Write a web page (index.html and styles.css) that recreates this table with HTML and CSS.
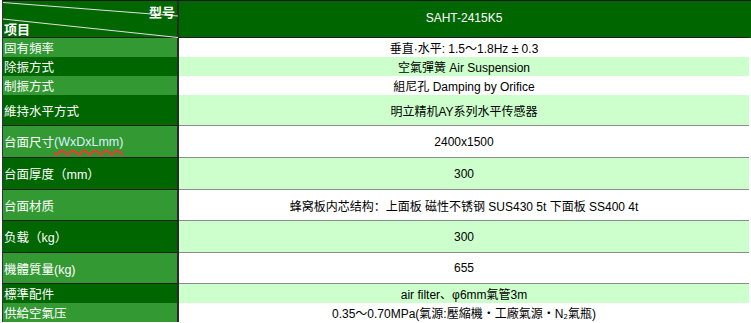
FILE: index.html
```html
<!DOCTYPE html>
<html lang="zh">
<head>
<meta charset="utf-8">
<title>SAHT-2415K5</title>
<link rel="stylesheet" href="styles.css">
</head>
<body>
<div class="spec">
  <div class="row head">
    <div class="key corner">
      <svg class="diag" width="175" height="37" viewBox="0 0 175 37">
        <line x1="0" y1="1.5" x2="175" y2="15" />
        <line x1="0" y1="18" x2="175" y2="36.5" />
      </svg>
      <span class="model">型号</span>
      <span class="item">项目</span>
    </div>
    <div class="val">SAHT-2415K5</div>
  </div>
  <div class="row s odd"><div class="key">固有頻率</div><div class="val">垂直·水平: 1.5～1.8Hz ± 0.3</div></div>
  <div class="row s even"><div class="key">除振方式</div><div class="val">空氣彈簧 Air Suspension</div></div>
  <div class="row s odd"><div class="key">制振方式</div><div class="val">組尼孔 Damping by Orifice</div></div>
  <div class="row t31 even"><div class="key">維持水平方式</div><div class="val">明立精机AY系列水平传感器</div></div>
  <div class="row t32 odd"><div class="key">台面尺寸<span class="link">(WxDxLmm)</span></div><div class="val">2400x1500</div></div>
  <div class="row t32 even"><div class="key">台面厚度（mm）</div><div class="val">300</div></div>
  <div class="row t31 odd"><div class="key">台面材质</div><div class="val">蜂窝板内芯结构：上面板 磁性不锈钢 SUS430 5t 下面板 SS400 4t</div></div>
  <div class="row t32 even"><div class="key">负载（kg）</div><div class="val">300</div></div>
  <div class="row t31 odd"><div class="key">機體質量(kg)</div><div class="val">655</div></div>
  <div class="row s even"><div class="key">標準配件</div><div class="val">air filter、φ6mm氣管3m</div></div>
  <div class="row s odd"><div class="key">供給空氣压</div><div class="val">0.35～0.70MPa(氣源:壓縮機・工廠氣源・N₂氣瓶)</div></div>
</div>
</body>
</html>
```
FILE: styles.css
```css
* { box-sizing: border-box; }
html, body { margin: 0; padding: 0; background: #fff; overflow: hidden; }
body {
  font-family: "Liberation Sans", Arial, "Noto Sans CJK SC", sans-serif;
  font-size: 12px;
}
.spec {
  margin-left: 2px;
  width: 760px;
  border-top: 1px solid #1a1a1a;
  border-left: 1px solid #333;
}
.row {
  display: grid;
  grid-template-columns: 176px 570px;
}
.row > div {
  display: flex;
  align-items: center;
}
.key {
  color: #fff;
  font-size: 12.5px;
  padding-left: 1px;
  border-right: 2px solid #2a2a2a;
  border-bottom: 1px solid #1f1f1f;
}
.val {
  justify-content: center;
  color: #000;
  border-bottom: 1px solid #8c8c8c;
}
.head { height: 37px; background: #006600; }
.head .key { position: relative; border-bottom: 1px solid #1f1f1f; }
.head .val { color: #fff; border-bottom: 1px solid #1f1f1f; padding-bottom: 2px; }
.s { height: 19px; }
.t31 { height: 31px; }
.t32 { height: 32px; }
.odd .key { background: #339933; }
.even .key { background: #006600; }
.odd .val { background: #ffffff; }
.even .val { background: #ccffcc; }
.diag { position: absolute; left: 0; top: 0; }
.diag line { stroke: #e0e0e0; stroke-width: 1; }
.corner .model, .corner .item {
  position: absolute;
  font-weight: bold;
  font-size: 13px;
  line-height: 14px;
  font-family: "Noto Sans CJK SC", sans-serif;
}
.corner .model { right: 2px; top: 4px; }
.corner .item { left: 1px; top: 21px; }
.link {
  color: #d9f2ff;
  text-decoration-line: underline;
  text-decoration-style: wavy;
  text-decoration-color: #ff3030;
  text-decoration-thickness: 1.5px;
  text-underline-offset: 3px;
}
```
